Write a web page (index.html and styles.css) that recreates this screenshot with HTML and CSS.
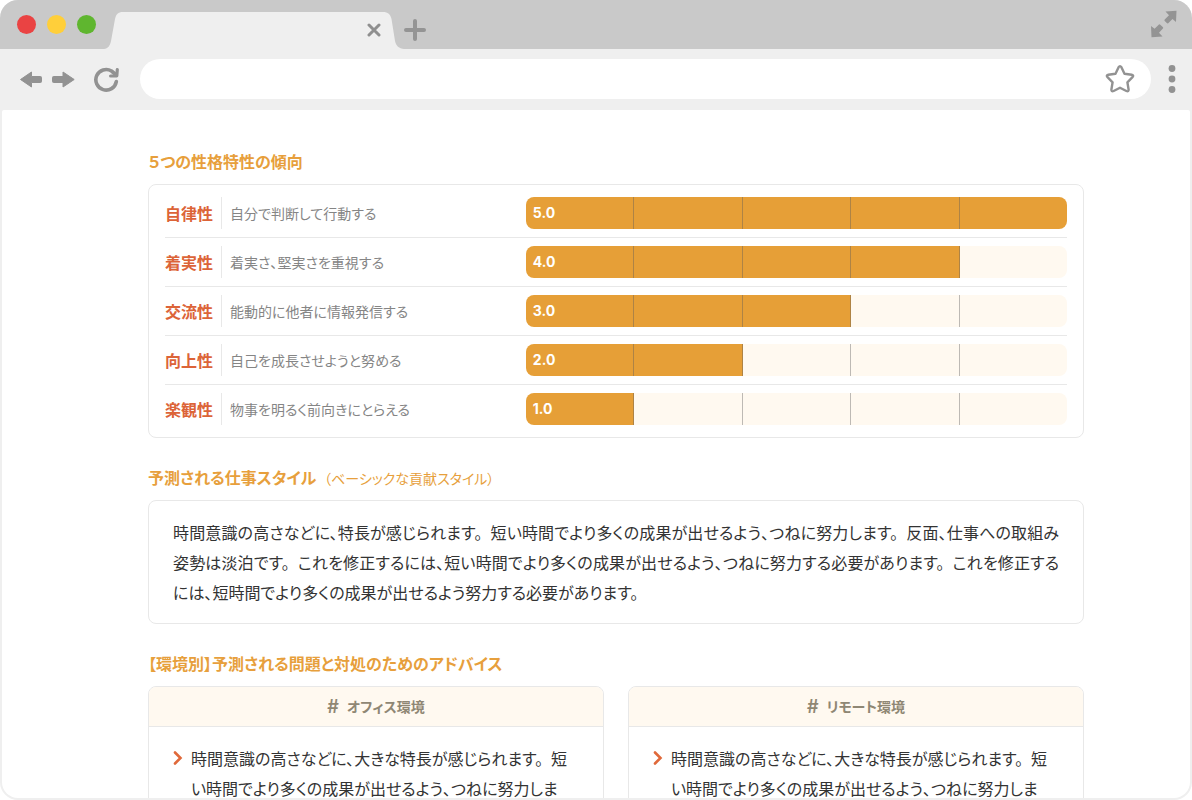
FILE: index.html
```html
<!DOCTYPE html>
<html lang="ja">
<head>
<meta charset="utf-8">
<meta name="viewport" content="width=device-width, initial-scale=1">
<title>性格特性レポート</title>
<link rel="stylesheet" href="styles.css">
</head>
<body>
<div class="window">
  <header class="tabbar">
    <div class="lights">
      <span class="light light-red"></span>
      <span class="light light-yellow"></span>
      <span class="light light-green"></span>
    </div>
    <div class="tab">
      <svg class="tab-shape" viewBox="0 0 300 37" aria-hidden="true"><path d="M0 37C4 36.500 6 34 7 29L11 7C12 2.500 14 0 19 0H279C284 0 286.500 2.500 287.500 7L291 29C292 34 295 36.500 300 37Z" fill="#efefef"/></svg>
      <button class="icon-btn tab-close" aria-label="タブを閉じる"><svg width="14" height="14" viewBox="0 0 14 14"><path d="M2 2L12 12M12 2L2 12" stroke="#8f8f8f" stroke-width="3" stroke-linecap="round"/></svg></button>
    </div>
    <button class="icon-btn" aria-label="新しいタブ"><svg width="22" height="22" viewBox="0 0 22 22"><path d="M11 2V20M2 11H20" stroke="#949494" stroke-width="4" stroke-linecap="round"/></svg></button>
    <button class="icon-btn expand" aria-label="全画面"><svg width="28" height="28" viewBox="0 0 28 28" fill="#949494"><path d="M15.500 1.500L26.500 .8L26 12L22.500 9L18.200 13.200Q17.500 13.700 16.800 13L14.700 10.900Q14.100 10.200 14.700 9.600L19 5.300Z"/><path d="M12.500 26.500L1.500 27.200L1 16L4.600 18.700L8.900 14.600Q9.600 14.100 10.300 14.700L13 17.300Q13.500 18 12.900 18.600L9 22.700Z"/></svg></button>
  </header>
  <div class="toolbar">
    <button class="icon-btn" aria-label="戻る"><svg width="23" height="18" viewBox="0 0 23 18"><path d="M1.500 9.500L12.500 2V6.500H21.500Q22.500 6.500 22.500 7.500V11.500Q22.500 12.500 21.500 12.500H12.500V17Z" fill="#929292" stroke="#929292" stroke-linejoin="round"/></svg></button>
    <button class="icon-btn" aria-label="進む"><svg width="23" height="18" viewBox="0 0 23 18"><path d="M22.200 9.500L11 2V6.500H1.500Q.5 6.500 .5 7.500V11.500Q.5 12.500 1.500 12.500H11V17Z" fill="#929292" stroke="#929292" stroke-linejoin="round"/></svg></button>
    <button class="icon-btn reload" aria-label="再読み込み"><svg width="26" height="26" viewBox="0 0 26 26" fill="none" stroke="#929292" stroke-linecap="round" stroke-linejoin="round"><path d="M23.300 15.600A10.300 10.300 0 1 1 18.500 5L21.500 7.500" stroke-width="3.600"/><path d="M24.300 3.500L23.800 10H17.600" stroke-width="3.200"/></svg></button>
    <div class="address">
      <input class="address-input" type="text" aria-label="アドレス">
      <button class="icon-btn" aria-label="ブックマーク"><svg width="30" height="30" viewBox="0 0 30 30"><path d="M13.600 3.200Q15 1 16.400 3.200L19.500 9.700L26.700 10.700Q29.200 11.300 27.500 13.200L22.400 18.300L23.600 25.500Q23.700 28 21.400 27L15 23.700L8.600 27Q6.300 28 6.400 25.500L7.600 18.300L2.500 13.200Q.8 11.300 3.300 10.700L10.500 9.700Z" fill="none" stroke="#929292" stroke-width="2.400" stroke-linejoin="round"/></svg></button>
    </div>
    <button class="icon-btn" aria-label="メニュー"><svg width="8" height="30" viewBox="0 0 8 30" fill="#929292"><circle cx="4" cy="4.500" r="3.400"/><circle cx="4" cy="15" r="3.400"/><circle cx="4" cy="25.500" r="3.400"/></svg></button>
  </div>
  <main class="page">
    <section class="section">
      <h2 class="heading">５つの性格特性の傾向</h2>
      <ul class="card traits">
        <li class="trait"><span class="trait-name">自律性</span><span class="trait-desc">自分で判断して行動する</span><div class="bar"><span class="seg on">5.0</span><span class="seg on"></span><span class="seg on"></span><span class="seg on"></span><span class="seg on"></span></div></li>
        <li class="trait"><span class="trait-name">着実性</span><span class="trait-desc">着実さ、堅実さを重視する</span><div class="bar"><span class="seg on">4.0</span><span class="seg on"></span><span class="seg on"></span><span class="seg on"></span><span class="seg"></span></div></li>
        <li class="trait"><span class="trait-name">交流性</span><span class="trait-desc">能動的に他者に情報発信する</span><div class="bar"><span class="seg on">3.0</span><span class="seg on"></span><span class="seg on"></span><span class="seg"></span><span class="seg"></span></div></li>
        <li class="trait"><span class="trait-name">向上性</span><span class="trait-desc">自己を成長させようと努める</span><div class="bar"><span class="seg on">2.0</span><span class="seg on"></span><span class="seg"></span><span class="seg"></span><span class="seg"></span></div></li>
        <li class="trait"><span class="trait-name">楽観性</span><span class="trait-desc">物事を明るく前向きにとらえる</span><div class="bar"><span class="seg on">1.0</span><span class="seg"></span><span class="seg"></span><span class="seg"></span><span class="seg"></span></div></li>
      </ul>
    </section>
    <section class="section">
      <h2 class="heading">予測される仕事スタイル <span class="heading-note">（ベーシックな貢献スタイル）</span></h2>
      <div class="card style-card"><p class="text">時間意識の高さなどに、特長が感じられます。&ensp;短い時間でより多くの成果が出せるよう、つねに努力します。&ensp;反面、仕事への取組み姿勢は淡泊です。&ensp;これを修正するには、短い時間でより多くの成果が出せるよう、つねに努力する必要があります。&ensp;これを修正するには、短時間でより多くの成果が出せるよう努力する必要があります。</p></div>
    </section>
    <section class="section">
      <h2 class="heading">【環境別】予測される問題と対処のためのアドバイス</h2>
      <div class="advice">
        <article class="card">
          <h3 class="advice-title"><span class="hash">#</span>オフィス環境</h3>
          <ul class="advice-list"><li class="advice-item"><svg class="chevron" width="10" height="14" viewBox="0 0 10 14" aria-hidden="true"><path d="M2 1.500L7.500 7L2 12.500" fill="none" stroke="#e0693a" stroke-width="2.600" stroke-linecap="round"/></svg><p class="text">時間意識の高さなどに、大きな特長が感じられます。&ensp;短い時間でより多くの成果が出せるよう、つねに努力しま</p></li></ul>
        </article>
        <article class="card">
          <h3 class="advice-title"><span class="hash">#</span>リモート環境</h3>
          <ul class="advice-list"><li class="advice-item"><svg class="chevron" width="10" height="14" viewBox="0 0 10 14" aria-hidden="true"><path d="M2 1.500L7.500 7L2 12.500" fill="none" stroke="#e0693a" stroke-width="2.600" stroke-linecap="round"/></svg><p class="text">時間意識の高さなどに、大きな特長が感じられます。&ensp;短い時間でより多くの成果が出せるよう、つねに努力しま</p></li></ul>
        </article>
      </div>
    </section>
  </main>
</div>
</body>
</html>
```
FILE: styles.css
```css
* { box-sizing: border-box; margin: 0; padding: 0; }
body {
  background: #fff;
  color: #333;
  font-family: "Noto Sans CJK JP", sans-serif;
  font-feature-settings: "palt";
}
.window {
  display: flex;
  flex-direction: column;
  height: 100vh;
  overflow: hidden;
  border-radius: 18px;
  background: #efefef;
}
.icon-btn { display: flex; flex: none; border: 0; background: none; cursor: pointer; }

.tabbar { display: flex; align-items: flex-start; height: 49px; flex: none; background: #c9c9c9; padding: 0 14px 0 17px; }
.lights { display: flex; gap: 11px; padding-top: 15px; }
.light { width: 19px; height: 19px; border-radius: 50%; }
.light-red { background: #ea4343; }
.light-yellow { background: #ffcf3a; }
.light-green { background: #5fb62f; }
.tab { position: relative; width: 300px; height: 37px; margin: 12px 0 0 8px; }
.tab-shape { position: absolute; inset: 0; width: 100%; height: 100%; }
.tab-close { position: absolute; top: 11px; right: 23px; }
.tabbar > .icon-btn { margin-top: 19px; }
.tabbar > .expand { margin: 10px 0 0 auto; }

.toolbar { display: flex; align-items: center; gap: 10px; height: 61px; flex: none; padding: 0 16px 1px 19px; }
.reload { margin: 0 11px 0 8px; }
.address { display: flex; align-items: center; flex: 1; height: 40px; padding: 0 16px; margin-right: 7px; background: #fff; border-radius: 20px; }
.address-input { flex: 1; min-width: 0; height: 100%; border: 0; outline: 0; background: none; font-size: 16px; }

.page {
  flex: 1;
  min-height: 0;
  overflow: hidden;
  margin: 0 2px 2px;
  padding: 39px 106px 0 146px;
  background: #fff;
  border-radius: 2px 2px 16px 16px;
}
.section { margin-bottom: 27px; }
.heading { margin-bottom: 11px; font-size: 16px; line-height: 24px; font-weight: 700; color: #e79f3c; }
.heading-note { margin-left: 4px; font-size: 14px; line-height: 16px; font-weight: 400; }
.card { overflow: hidden; border: 1px solid #e8e8e8; border-radius: 8px; background: #fff; }

.traits { padding: 4px 16px; list-style: none; }
.trait { display: grid; grid-template-columns: 57px 1fr 60%; align-items: center; padding: 8px 0; }
.trait + .trait { border-top: 1px solid #e8e8e8; }
.trait-name { border-right: 1px solid #e8e8e8; font-size: 16px; line-height: 32px; font-weight: 700; color: #dc6438; }
.trait-desc { padding-left: 8px; font-size: 14px; line-height: 32px; color: #858585; }
.bar { display: flex; height: 32px; overflow: hidden; border-radius: 8px; }
.seg { flex: 1; padding-left: 7px; background: #fff9f0; font: 700 14px/32px Inter, sans-serif; color: #fff; }
.seg.on { background: #e69f37; }
.seg:not(:last-child) { border-right: 1px solid rgba(90, 90, 90, .4); }

.style-card { padding: 16px 24px; text-align: justify; }
.text { font-size: 16px; line-height: 30px; }

.advice { display: grid; grid-template-columns: 1fr 1fr; gap: 24px; }
.advice-title { display: flex; justify-content: center; gap: 8px; border-bottom: 1px solid #e8e8e8; background: #fff9f0; font-size: 14px; line-height: 39px; color: #8f8774; }
.hash { font-family: Inter, sans-serif; font-size: 18px; font-weight: 600; }
.advice-list { padding: 16px 32px 16px 24px; list-style: none; }
.advice-item { display: flex; gap: 8px; }
.chevron { flex: none; margin-top: 8px; }
```
